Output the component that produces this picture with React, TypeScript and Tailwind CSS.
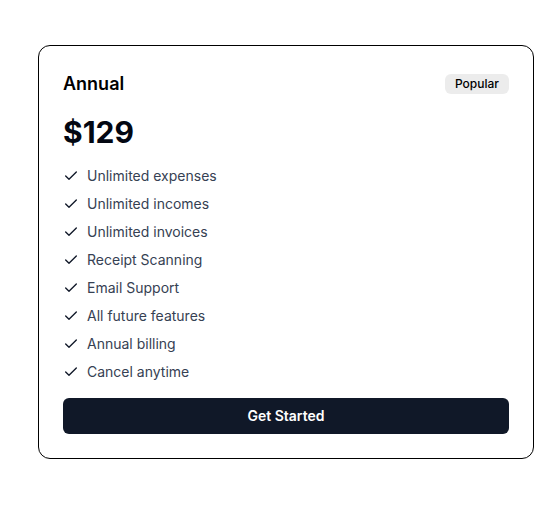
import { Check } from "lucide-react";

const features = [
  "Unlimited expenses",
  "Unlimited incomes",
  "Unlimited invoices",
  "Receipt Scanning",
  "Email Support",
  "All future features",
  "Annual billing",
  "Cancel anytime",
];

export default function App() {
  return (
    <div
      className="min-h-screen bg-white pl-[38px] pt-[45px]"
      style={{ fontFamily: "Inter, 'Noto Sans', sans-serif" }}
    >
      <div className="w-[496px] rounded-xl border border-black bg-white p-6">
        {/* Plan header */}
        <div className="flex h-7 items-center justify-between">
          <h2 className="text-lg font-semibold text-black">Annual</h2>
          <span className="rounded-md bg-[#ececec] px-2.5 py-0.5 text-xs font-medium text-black">
            Popular
          </span>
        </div>

        <p className="mt-4 text-3xl font-bold text-gray-950">$129</p>

        <ul className="mt-4 flex flex-col gap-2">
          {features.map((feature) => (
            <li key={feature} className="flex items-center gap-2 text-sm text-gray-700">
              <Check className="h-4 w-4 text-gray-900" strokeWidth={2} />
              {feature}
            </li>
          ))}
        </ul>

        <button className="mt-4 flex h-9 w-full items-center justify-center rounded-md bg-gray-900 text-sm font-semibold text-white">
          Get Started
        </button>
      </div>
    </div>
  );
}
